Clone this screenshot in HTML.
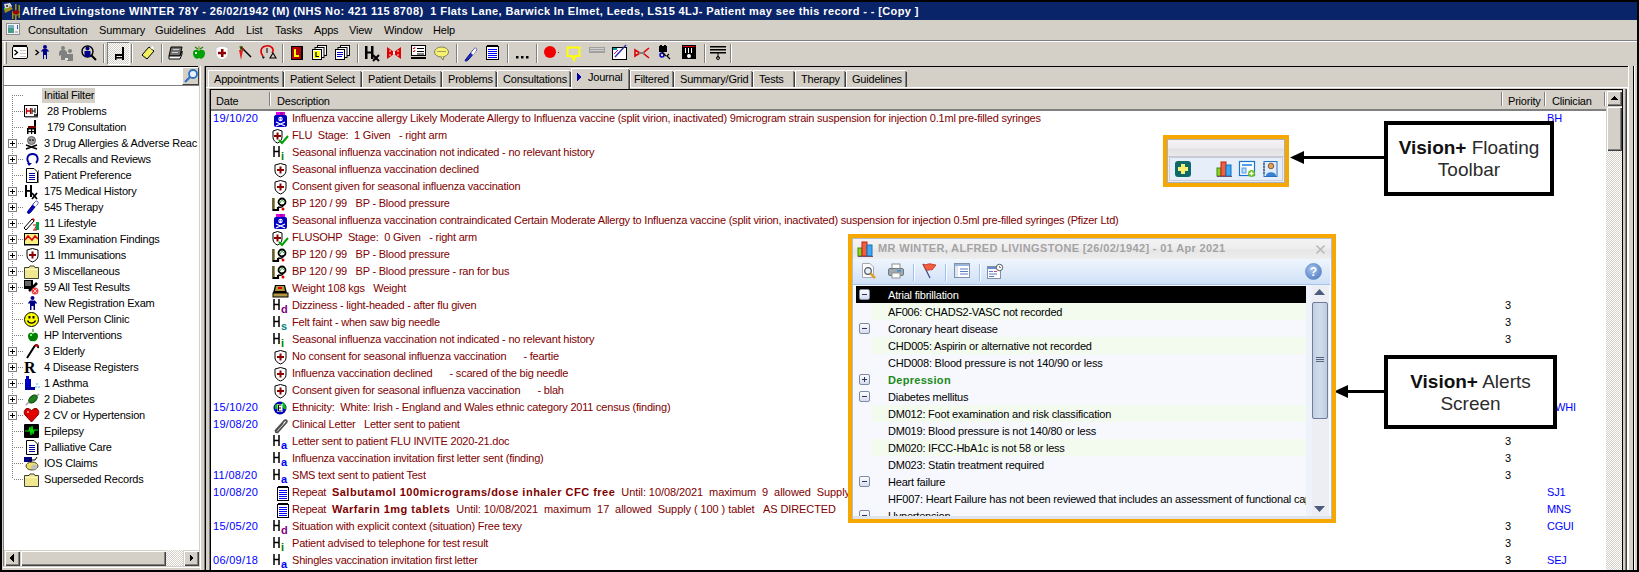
<!DOCTYPE html><html><head><meta charset="utf-8"><style>
*{margin:0;padding:0;box-sizing:border-box}
html,body{width:1639px;height:572px;overflow:hidden;background:#000}
body{position:relative;font-family:"Liberation Sans",sans-serif;font-size:11px;color:#000}
.a{position:absolute}
.t{position:absolute;white-space:pre;line-height:13px}
.j{letter-spacing:-0.21px}
.b{font-weight:bold}
.rx{font-weight:bold;letter-spacing:0.5px}
svg{position:absolute;overflow:visible}
</style></head><body>
<div class="a" style="left:2px;top:2px;width:1635px;height:18px;background:#0a246a"></div>
<div class="t b" style="left:22px;top:5px;color:#fff;letter-spacing:0.39px">Alfred Livingstone WINTER 78Y - 26/02/1942 (M) (NHS No: 421 115 8708)  1 Flats Lane, Barwick In Elmet, Leeds, LS15 4LJ- Patient may see this record - - [Copy ]</div>
<div class="a" style="left:2px;top:20px;width:1635px;height:20px;background:#d4d0c8"></div>
<div class="a" style="left:2px;top:40px;width:1635px;height:1px;background:#808080"></div>
<div class="a" style="left:2px;top:41px;width:1635px;height:1px;background:#fff"></div>
<div class="t " style="left:28px;top:24px;letter-spacing:-0.15px">Consultation</div>
<div class="t " style="left:99px;top:24px;letter-spacing:-0.15px">Summary</div>
<div class="t " style="left:155px;top:24px;letter-spacing:-0.15px">Guidelines</div>
<div class="t " style="left:215px;top:24px;letter-spacing:-0.15px">Add</div>
<div class="t " style="left:246px;top:24px;letter-spacing:-0.15px">List</div>
<div class="t " style="left:275px;top:24px;letter-spacing:-0.15px">Tasks</div>
<div class="t " style="left:314px;top:24px;letter-spacing:-0.15px">Apps</div>
<div class="t " style="left:349px;top:24px;letter-spacing:-0.15px">View</div>
<div class="t " style="left:384px;top:24px;letter-spacing:-0.15px">Window</div>
<div class="t " style="left:433px;top:24px;letter-spacing:-0.15px">Help</div>
<div class="a" style="left:2px;top:42px;width:1635px;height:24px;background:#d4d0c8"></div>
<div class="a" style="left:2px;top:66px;width:203px;height:504px;background:#d4d0c8"></div>
<div class="a" style="left:3px;top:66px;width:195px;height:1px;background:#000"></div>
<div class="a" style="left:3px;top:67px;width:1px;height:503px;background:#808080"></div>
<div class="a" style="left:4px;top:67px;width:195px;height:18px;background:#fff"></div>
<div class="a" style="left:4px;top:85px;width:195px;height:1px;background:#808080"></div>
<div class="a" style="left:4px;top:86px;width:195px;height:464px;background:#fff"></div>
<div class="a" style="left:200px;top:66px;width:1px;height:504px;background:#fff"></div>
<div class="a" style="left:204px;top:66px;width:1px;height:504px;background:#808080"></div>
<div class="a" style="left:205px;top:66px;width:1px;height:504px;background:#000"></div>
<div class="a" style="left:206px;top:67px;width:1422px;height:503px;background:#d4d0c8"></div>
<div class="a" style="left:205px;top:66px;width:1423px;height:1px;background:#000"></div>
<div class="a" style="left:1628px;top:66px;width:1px;height:504px;background:#fff"></div>
<div class="a" style="left:1633px;top:66px;width:1px;height:504px;background:#000"></div>
<div class="a" style="left:1634px;top:66px;width:1px;height:504px;background:#fff"></div>
<div class="a" style="left:1635px;top:66px;width:2px;height:504px;background:#d4d0c8"></div>
<div class="a" style="left:1629px;top:66px;width:4px;height:504px;background:#d4d0c8"></div>
<div class="a" style="left:1625px;top:89px;width:1px;height:481px;background:#808080"></div>
<div class="a" style="left:1626px;top:89px;width:1px;height:481px;background:#404040"></div>
<div class="a" style="left:1627px;top:87px;width:1px;height:483px;background:#fff"></div>
<div class="a" style="left:209px;top:89px;width:1414px;height:481px;background:#808080"></div>
<div class="a" style="left:210px;top:89px;width:1413px;height:1px;background:#000"></div>
<div class="a" style="left:210px;top:90px;width:1px;height:480px;background:#000"></div>
<div class="a" style="left:1622px;top:89px;width:1px;height:481px;background:#000"></div>
<div class="a" style="left:211px;top:90px;width:1411px;height:19px;background:#d4d0c8"></div>
<div class="a" style="left:211px;top:109px;width:1395px;height:2px;background:#808080"></div>
<div class="a" style="left:211px;top:111px;width:1395px;height:459px;background:#fff"></div>
<div class="t j" style="left:216px;top:95px;">Date</div>
<div class="t j" style="left:277px;top:95px;">Description</div>
<div class="t j" style="left:1508px;top:95px;">Priority</div>
<div class="t j" style="left:1552px;top:95px;">Clinician</div>
<div class="a" style="left:269px;top:92px;width:1px;height:14px;background:#808080"></div>
<div class="a" style="left:270px;top:92px;width:1px;height:14px;background:#fff"></div>
<div class="a" style="left:1501px;top:92px;width:1px;height:14px;background:#808080"></div>
<div class="a" style="left:1502px;top:92px;width:1px;height:14px;background:#fff"></div>
<div class="a" style="left:1544px;top:92px;width:1px;height:14px;background:#808080"></div>
<div class="a" style="left:1545px;top:92px;width:1px;height:14px;background:#fff"></div>
<div class="a" style="left:1604px;top:92px;width:1px;height:14px;background:#808080"></div>
<div class="a" style="left:1605px;top:92px;width:1px;height:14px;background:#fff"></div>
<div class="a" style="left:208px;top:70px;width:75px;height:17px;background:#d4d0c8;border-top:1px solid #fff;border-left:1px solid #fff"></div>
<div class="a" style="left:282px;top:71px;width:1px;height:16px;background:#808080"></div>
<div class="a" style="left:283px;top:72px;width:1px;height:15px;background:#404040"></div>
<div class="t j" style="left:214px;top:73px;">Appointments</div>
<div class="a" style="left:284px;top:70px;width:77px;height:17px;background:#d4d0c8;border-top:1px solid #fff;border-left:1px solid #fff"></div>
<div class="a" style="left:360px;top:71px;width:1px;height:16px;background:#808080"></div>
<div class="a" style="left:361px;top:72px;width:1px;height:15px;background:#404040"></div>
<div class="t j" style="left:290px;top:73px;">Patient Select</div>
<div class="a" style="left:362px;top:70px;width:79px;height:17px;background:#d4d0c8;border-top:1px solid #fff;border-left:1px solid #fff"></div>
<div class="a" style="left:440px;top:71px;width:1px;height:16px;background:#808080"></div>
<div class="a" style="left:441px;top:72px;width:1px;height:15px;background:#404040"></div>
<div class="t j" style="left:368px;top:73px;">Patient Details</div>
<div class="a" style="left:442px;top:70px;width:54px;height:17px;background:#d4d0c8;border-top:1px solid #fff;border-left:1px solid #fff"></div>
<div class="a" style="left:495px;top:71px;width:1px;height:16px;background:#808080"></div>
<div class="a" style="left:496px;top:72px;width:1px;height:15px;background:#404040"></div>
<div class="t j" style="left:448px;top:73px;">Problems</div>
<div class="a" style="left:497px;top:70px;width:73px;height:17px;background:#d4d0c8;border-top:1px solid #fff;border-left:1px solid #fff"></div>
<div class="a" style="left:569px;top:71px;width:1px;height:16px;background:#808080"></div>
<div class="a" style="left:570px;top:72px;width:1px;height:15px;background:#404040"></div>
<div class="t j" style="left:503px;top:73px;">Consultations</div>
<div class="a" style="left:630px;top:70px;width:43px;height:17px;background:#d4d0c8;border-top:1px solid #fff;border-left:1px solid #fff"></div>
<div class="a" style="left:672px;top:71px;width:1px;height:16px;background:#808080"></div>
<div class="a" style="left:673px;top:72px;width:1px;height:15px;background:#404040"></div>
<div class="t j" style="left:634px;top:73px;">Filtered</div>
<div class="a" style="left:674px;top:70px;width:78px;height:17px;background:#d4d0c8;border-top:1px solid #fff;border-left:1px solid #fff"></div>
<div class="a" style="left:751px;top:71px;width:1px;height:16px;background:#808080"></div>
<div class="a" style="left:752px;top:72px;width:1px;height:15px;background:#404040"></div>
<div class="t j" style="left:680px;top:73px;">Summary/Grid</div>
<div class="a" style="left:753px;top:70px;width:41px;height:17px;background:#d4d0c8;border-top:1px solid #fff;border-left:1px solid #fff"></div>
<div class="a" style="left:793px;top:71px;width:1px;height:16px;background:#808080"></div>
<div class="a" style="left:794px;top:72px;width:1px;height:15px;background:#404040"></div>
<div class="t j" style="left:759px;top:73px;">Tests</div>
<div class="a" style="left:795px;top:70px;width:50px;height:17px;background:#d4d0c8;border-top:1px solid #fff;border-left:1px solid #fff"></div>
<div class="a" style="left:844px;top:71px;width:1px;height:16px;background:#808080"></div>
<div class="a" style="left:845px;top:72px;width:1px;height:15px;background:#404040"></div>
<div class="t j" style="left:801px;top:73px;">Therapy</div>
<div class="a" style="left:846px;top:70px;width:60px;height:17px;background:#d4d0c8;border-top:1px solid #fff;border-left:1px solid #fff"></div>
<div class="a" style="left:905px;top:71px;width:1px;height:16px;background:#808080"></div>
<div class="a" style="left:906px;top:72px;width:1px;height:15px;background:#404040"></div>
<div class="t j" style="left:852px;top:73px;">Guidelines</div>
<div class="a" style="left:206px;top:87px;width:1422px;height:1px;background:#fff"></div>
<div class="a" style="left:571px;top:68px;width:58px;height:21px;background:#d4d0c8;border-top:1px solid #fff;border-left:1px solid #fff"></div>
<div class="a" style="left:628px;top:69px;width:1px;height:20px;background:#808080"></div>
<div class="a" style="left:629px;top:70px;width:1px;height:19px;background:#404040"></div>
<div class="t j" style="left:588px;top:71px;">Journal</div>
<svg style="left:577px;top:73px" width="5" height="8" viewBox="0 0 5 8" shape-rendering="crispEdges"><path d="M0 0 L5 4 L0 8Z" fill="#0000a0"/></svg>
<div class="a" style="left:4px;top:86px;width:195px;height:464px;overflow:hidden">
<div class="a" style="left:38px;top:2px;width:53px;height:15px;background:#d4d0c8"></div>
<div class="t j" style="left:40px;top:3px;">Initial Filter</div>
<div class="t j" style="left:43px;top:19px;">28 Problems</div>
<div class="t j" style="left:43px;top:35px;">179 Consultation</div>
<div class="t j" style="left:40px;top:51px;">3 Drug Allergies &amp; Adverse Reac</div>
<div class="t j" style="left:40px;top:67px;">2 Recalls and Reviews</div>
<div class="t j" style="left:40px;top:83px;">Patient Preference</div>
<div class="t j" style="left:40px;top:99px;">175 Medical History</div>
<div class="t j" style="left:40px;top:115px;">545 Therapy</div>
<div class="t j" style="left:40px;top:131px;">11 Lifestyle</div>
<div class="t j" style="left:40px;top:147px;">39 Examination Findings</div>
<div class="t j" style="left:40px;top:163px;">11 Immunisations</div>
<div class="t j" style="left:40px;top:179px;">3 Miscellaneous</div>
<div class="t j" style="left:40px;top:195px;">59 All Test Results</div>
<div class="t j" style="left:40px;top:211px;">New Registration Exam</div>
<div class="t j" style="left:40px;top:227px;">Well Person Clinic</div>
<div class="t j" style="left:40px;top:243px;">HP Interventions</div>
<div class="t j" style="left:40px;top:259px;">3 Elderly</div>
<div class="t j" style="left:40px;top:275px;">4 Disease Registers</div>
<div class="t j" style="left:40px;top:291px;">1 Asthma</div>
<div class="t j" style="left:40px;top:307px;">2 Diabetes</div>
<div class="t j" style="left:40px;top:323px;">2 CV or Hypertension</div>
<div class="t j" style="left:40px;top:339px;">Epilepsy</div>
<div class="t j" style="left:40px;top:355px;">Palliative Care</div>
<div class="t j" style="left:40px;top:371px;">IOS Claims</div>
<div class="t j" style="left:40px;top:387px;">Superseded Records</div>
<div class="a" style="left:8px;top:9px;width:1px;height:384px;background:repeating-linear-gradient(#808080 0 1px,transparent 1px 2px)"></div>
<div class="a" style="left:9px;top:9px;width:10px;height:1px;background:repeating-linear-gradient(90deg,transparent 0 1px,#808080 1px 2px)"></div>
<div class="a" style="left:9px;top:25px;width:10px;height:1px;background:repeating-linear-gradient(90deg,transparent 0 1px,#808080 1px 2px)"></div>
<div class="a" style="left:9px;top:41px;width:10px;height:1px;background:repeating-linear-gradient(90deg,transparent 0 1px,#808080 1px 2px)"></div>
<div class="a" style="left:9px;top:57px;width:10px;height:1px;background:repeating-linear-gradient(90deg,transparent 0 1px,#808080 1px 2px)"></div>
<div class="a" style="left:4px;top:53px;width:9px;height:9px;background:#fff;border:1px solid #808080"></div>
<div class="a" style="left:6px;top:57px;width:5px;height:1px;background:#000"></div>
<div class="a" style="left:8px;top:55px;width:1px;height:5px;background:#000"></div>
<div class="a" style="left:9px;top:73px;width:10px;height:1px;background:repeating-linear-gradient(90deg,transparent 0 1px,#808080 1px 2px)"></div>
<div class="a" style="left:4px;top:69px;width:9px;height:9px;background:#fff;border:1px solid #808080"></div>
<div class="a" style="left:6px;top:73px;width:5px;height:1px;background:#000"></div>
<div class="a" style="left:8px;top:71px;width:1px;height:5px;background:#000"></div>
<div class="a" style="left:9px;top:89px;width:10px;height:1px;background:repeating-linear-gradient(90deg,transparent 0 1px,#808080 1px 2px)"></div>
<div class="a" style="left:9px;top:105px;width:10px;height:1px;background:repeating-linear-gradient(90deg,transparent 0 1px,#808080 1px 2px)"></div>
<div class="a" style="left:4px;top:101px;width:9px;height:9px;background:#fff;border:1px solid #808080"></div>
<div class="a" style="left:6px;top:105px;width:5px;height:1px;background:#000"></div>
<div class="a" style="left:8px;top:103px;width:1px;height:5px;background:#000"></div>
<div class="a" style="left:9px;top:121px;width:10px;height:1px;background:repeating-linear-gradient(90deg,transparent 0 1px,#808080 1px 2px)"></div>
<div class="a" style="left:4px;top:117px;width:9px;height:9px;background:#fff;border:1px solid #808080"></div>
<div class="a" style="left:6px;top:121px;width:5px;height:1px;background:#000"></div>
<div class="a" style="left:8px;top:119px;width:1px;height:5px;background:#000"></div>
<div class="a" style="left:9px;top:137px;width:10px;height:1px;background:repeating-linear-gradient(90deg,transparent 0 1px,#808080 1px 2px)"></div>
<div class="a" style="left:4px;top:133px;width:9px;height:9px;background:#fff;border:1px solid #808080"></div>
<div class="a" style="left:6px;top:137px;width:5px;height:1px;background:#000"></div>
<div class="a" style="left:8px;top:135px;width:1px;height:5px;background:#000"></div>
<div class="a" style="left:9px;top:153px;width:10px;height:1px;background:repeating-linear-gradient(90deg,transparent 0 1px,#808080 1px 2px)"></div>
<div class="a" style="left:4px;top:149px;width:9px;height:9px;background:#fff;border:1px solid #808080"></div>
<div class="a" style="left:6px;top:153px;width:5px;height:1px;background:#000"></div>
<div class="a" style="left:8px;top:151px;width:1px;height:5px;background:#000"></div>
<div class="a" style="left:9px;top:169px;width:10px;height:1px;background:repeating-linear-gradient(90deg,transparent 0 1px,#808080 1px 2px)"></div>
<div class="a" style="left:4px;top:165px;width:9px;height:9px;background:#fff;border:1px solid #808080"></div>
<div class="a" style="left:6px;top:169px;width:5px;height:1px;background:#000"></div>
<div class="a" style="left:8px;top:167px;width:1px;height:5px;background:#000"></div>
<div class="a" style="left:9px;top:185px;width:10px;height:1px;background:repeating-linear-gradient(90deg,transparent 0 1px,#808080 1px 2px)"></div>
<div class="a" style="left:4px;top:181px;width:9px;height:9px;background:#fff;border:1px solid #808080"></div>
<div class="a" style="left:6px;top:185px;width:5px;height:1px;background:#000"></div>
<div class="a" style="left:8px;top:183px;width:1px;height:5px;background:#000"></div>
<div class="a" style="left:9px;top:201px;width:10px;height:1px;background:repeating-linear-gradient(90deg,transparent 0 1px,#808080 1px 2px)"></div>
<div class="a" style="left:4px;top:197px;width:9px;height:9px;background:#fff;border:1px solid #808080"></div>
<div class="a" style="left:6px;top:201px;width:5px;height:1px;background:#000"></div>
<div class="a" style="left:8px;top:199px;width:1px;height:5px;background:#000"></div>
<div class="a" style="left:9px;top:217px;width:10px;height:1px;background:repeating-linear-gradient(90deg,transparent 0 1px,#808080 1px 2px)"></div>
<div class="a" style="left:9px;top:233px;width:10px;height:1px;background:repeating-linear-gradient(90deg,transparent 0 1px,#808080 1px 2px)"></div>
<div class="a" style="left:9px;top:249px;width:10px;height:1px;background:repeating-linear-gradient(90deg,transparent 0 1px,#808080 1px 2px)"></div>
<div class="a" style="left:9px;top:265px;width:10px;height:1px;background:repeating-linear-gradient(90deg,transparent 0 1px,#808080 1px 2px)"></div>
<div class="a" style="left:4px;top:261px;width:9px;height:9px;background:#fff;border:1px solid #808080"></div>
<div class="a" style="left:6px;top:265px;width:5px;height:1px;background:#000"></div>
<div class="a" style="left:8px;top:263px;width:1px;height:5px;background:#000"></div>
<div class="a" style="left:9px;top:281px;width:10px;height:1px;background:repeating-linear-gradient(90deg,transparent 0 1px,#808080 1px 2px)"></div>
<div class="a" style="left:4px;top:277px;width:9px;height:9px;background:#fff;border:1px solid #808080"></div>
<div class="a" style="left:6px;top:281px;width:5px;height:1px;background:#000"></div>
<div class="a" style="left:8px;top:279px;width:1px;height:5px;background:#000"></div>
<div class="a" style="left:9px;top:297px;width:10px;height:1px;background:repeating-linear-gradient(90deg,transparent 0 1px,#808080 1px 2px)"></div>
<div class="a" style="left:4px;top:293px;width:9px;height:9px;background:#fff;border:1px solid #808080"></div>
<div class="a" style="left:6px;top:297px;width:5px;height:1px;background:#000"></div>
<div class="a" style="left:8px;top:295px;width:1px;height:5px;background:#000"></div>
<div class="a" style="left:9px;top:313px;width:10px;height:1px;background:repeating-linear-gradient(90deg,transparent 0 1px,#808080 1px 2px)"></div>
<div class="a" style="left:4px;top:309px;width:9px;height:9px;background:#fff;border:1px solid #808080"></div>
<div class="a" style="left:6px;top:313px;width:5px;height:1px;background:#000"></div>
<div class="a" style="left:8px;top:311px;width:1px;height:5px;background:#000"></div>
<div class="a" style="left:9px;top:329px;width:10px;height:1px;background:repeating-linear-gradient(90deg,transparent 0 1px,#808080 1px 2px)"></div>
<div class="a" style="left:4px;top:325px;width:9px;height:9px;background:#fff;border:1px solid #808080"></div>
<div class="a" style="left:6px;top:329px;width:5px;height:1px;background:#000"></div>
<div class="a" style="left:8px;top:327px;width:1px;height:5px;background:#000"></div>
<div class="a" style="left:9px;top:345px;width:10px;height:1px;background:repeating-linear-gradient(90deg,transparent 0 1px,#808080 1px 2px)"></div>
<div class="a" style="left:9px;top:361px;width:10px;height:1px;background:repeating-linear-gradient(90deg,transparent 0 1px,#808080 1px 2px)"></div>
<div class="a" style="left:9px;top:377px;width:10px;height:1px;background:repeating-linear-gradient(90deg,transparent 0 1px,#808080 1px 2px)"></div>
<div class="a" style="left:9px;top:393px;width:10px;height:1px;background:repeating-linear-gradient(90deg,transparent 0 1px,#808080 1px 2px)"></div>
</div>
<div class="a" style="left:4px;top:550px;width:195px;height:16px;background:repeating-conic-gradient(#d4d0c8 0 25%,#fff 0 50%) 0 0/2px 2px"></div>
<div class="a" style="left:4px;top:550px;width:16px;height:16px;background:#d4d0c8;box-shadow:inset 1px 1px #d4d0c8,inset 2px 2px #fff,inset -1px -1px #404040,inset -2px -2px #808080"></div>
<div class="a" style="left:20px;top:550px;width:146px;height:16px;background:#d4d0c8;box-shadow:inset 1px 1px #d4d0c8,inset 2px 2px #fff,inset -1px -1px #404040,inset -2px -2px #808080"></div>
<div class="a" style="left:183px;top:550px;width:16px;height:16px;background:#d4d0c8;box-shadow:inset 1px 1px #d4d0c8,inset 2px 2px #fff,inset -1px -1px #404040,inset -2px -2px #808080"></div>
<svg style="left:9px;top:554px" width="5" height="8" viewBox="0 0 5 8" shape-rendering="crispEdges"><path d="M4.5 0 V8 L0.5 4Z" fill="#000"/></svg>
<svg style="left:189px;top:554px" width="5" height="8" viewBox="0 0 5 8" shape-rendering="crispEdges"><path d="M0.5 0 V8 L4.5 4Z" fill="#000"/></svg>
<div class="a" style="left:3px;top:566px;width:197px;height:1px;background:#d4d0c8"></div>
<div class="a" style="left:3px;top:567px;width:197px;height:1px;background:#fff"></div>
<div class="a" style="left:3px;top:568px;width:197px;height:2px;background:#d4d0c8"></div>
<div class="a" style="left:2px;top:570px;width:1637px;height:2px;background:#000"></div>
<div class="a" style="left:211px;top:111px;width:1395px;height:459px;overflow:hidden">
<div class="t " style="left:2px;top:1px;color:#0000ff;letter-spacing:0.3px">19/10/20</div>
<div class="t j" style="left:81px;top:1px;color:#800000">Influenza vaccine allergy Likely Moderate Allergy to Influenza vaccine (split virion, inactivated) 9microgram strain suspension for injection 0.1ml pre-filled syringes</div>
<div class="t j" style="left:1336px;top:1px;color:#0000ff">BH</div>
<div class="t j" style="left:81px;top:18px;color:#800000">FLU  Stage:  1 Given   - right arm</div>
<div class="t j" style="left:81px;top:35px;color:#800000">Seasonal influenza vaccination not indicated - no relevant history</div>
<div class="t j" style="left:81px;top:52px;color:#800000">Seasonal influenza vaccination declined</div>
<div class="t j" style="left:81px;top:69px;color:#800000">Consent given for seasonal influenza vaccination</div>
<div class="t j" style="left:81px;top:86px;color:#800000">BP 120 / 99   BP - Blood pressure</div>
<div class="t j" style="left:81px;top:103px;color:#800000">Seasonal influenza vaccination contraindicated Certain Moderate Allergy to Influenza vaccine (split virion, inactivated) suspension for injection 0.5ml pre-filled syringes (Pfizer Ltd)</div>
<div class="t j" style="left:81px;top:120px;color:#800000">FLUSOHP  Stage:  0 Given   - right arm</div>
<div class="t j" style="left:81px;top:137px;color:#800000">BP 120 / 99   BP - Blood pressure</div>
<div class="t j" style="left:81px;top:154px;color:#800000">BP 120 / 99   BP - Blood pressure - ran for bus</div>
<div class="t j" style="left:81px;top:171px;color:#800000">Weight 108 kgs   Weight</div>
<div class="t j" style="left:81px;top:188px;color:#800000">Dizziness - light-headed - after flu given</div>
<div class="t j" style="left:1294px;top:188px;">3</div>
<div class="t j" style="left:81px;top:205px;color:#800000">Felt faint - when saw big needle</div>
<div class="t j" style="left:1294px;top:205px;">3</div>
<div class="t j" style="left:81px;top:222px;color:#800000">Seasonal influenza vaccination not indicated - no relevant history</div>
<div class="t j" style="left:1294px;top:222px;">3</div>
<div class="t j" style="left:81px;top:239px;color:#800000">No consent for seasonal influenza vaccination      - feartie</div>
<div class="t j" style="left:81px;top:256px;color:#800000">Influenza vaccination declined      - scared of the big needle</div>
<div class="t j" style="left:81px;top:273px;color:#800000">Consent given for seasonal influenza vaccination      - blah</div>
<div class="t " style="left:2px;top:290px;color:#0000ff;letter-spacing:0.3px">15/10/20</div>
<div class="t j" style="left:81px;top:290px;color:#800000">Ethnicity:  White: Irish - England and Wales ethnic category 2011 census (finding)</div>
<div class="t j" style="left:1344px;top:290px;color:#0000ff">WHI</div>
<div class="t " style="left:2px;top:307px;color:#0000ff;letter-spacing:0.3px">19/08/20</div>
<div class="t j" style="left:81px;top:307px;color:#800000">Clinical Letter   Letter sent to patient</div>
<div class="t j" style="left:81px;top:324px;color:#800000">Letter sent to patient FLU INVITE 2020-21.doc</div>
<div class="t j" style="left:1294px;top:324px;">3</div>
<div class="t j" style="left:81px;top:341px;color:#800000">Influenza vaccination invitation first letter sent (finding)</div>
<div class="t j" style="left:1294px;top:341px;">3</div>
<div class="t " style="left:2px;top:358px;color:#0000ff;letter-spacing:0.3px">11/08/20</div>
<div class="t j" style="left:81px;top:358px;color:#800000">SMS text sent to patient Test</div>
<div class="t j" style="left:1294px;top:358px;">3</div>
<div class="t " style="left:2px;top:375px;color:#0000ff;letter-spacing:0.3px">10/08/20</div>
<div class="t j" style="left:81px;top:375px;color:#800000">Repeat  <b class="rx">Salbutamol 100micrograms/dose inhaler CFC free</b><span style="letter-spacing:-0.08px">  Until: 10/08/2021  maximum  9  allowed  Supply ( 200 ) dose  AS DIRECTED</span></div>
<div class="t j" style="left:1336px;top:375px;color:#0000ff">SJ1</div>
<div class="t j" style="left:81px;top:392px;color:#800000">Repeat  <b class="rx">Warfarin 1mg tablets</b><span style="letter-spacing:-0.08px">  Until: 10/08/2021  maximum  17  allowed  Supply ( 100 ) tablet   AS DIRECTED</span></div>
<div class="t j" style="left:1336px;top:392px;color:#0000ff">MNS</div>
<div class="t " style="left:2px;top:409px;color:#0000ff;letter-spacing:0.3px">15/05/20</div>
<div class="t j" style="left:81px;top:409px;color:#800000">Situation with explicit context (situation) Free texy</div>
<div class="t j" style="left:1294px;top:409px;">3</div>
<div class="t j" style="left:1336px;top:409px;color:#0000ff">CGUI</div>
<div class="t j" style="left:81px;top:426px;color:#800000">Patient advised to telephone for test result</div>
<div class="t j" style="left:1294px;top:426px;">3</div>
<div class="t " style="left:2px;top:443px;color:#0000ff;letter-spacing:0.3px">06/09/18</div>
<div class="t j" style="left:81px;top:443px;color:#800000">Shingles vaccination invitation first letter</div>
<div class="t j" style="left:1294px;top:443px;">3</div>
<div class="t j" style="left:1336px;top:443px;color:#0000ff">SEJ</div>
</div>
<div class="a" style="left:1606px;top:90px;width:16px;height:480px;background:repeating-conic-gradient(#d4d0c8 0 25%,#fff 0 50%) 0 0/2px 2px"></div>
<div class="a" style="left:1606px;top:90px;width:16px;height:16px;background:#d4d0c8;box-shadow:inset 1px 1px #d4d0c8,inset 2px 2px #fff,inset -1px -1px #404040,inset -2px -2px #808080"></div>
<svg style="left:1610px;top:96px" width="8" height="5" viewBox="0 0 8 5" shape-rendering="crispEdges"><path d="M0 4 L4 0 L8 4Z" fill="#000"/></svg>
<div class="a" style="left:1606px;top:106px;width:16px;height:45px;background:#d4d0c8;box-shadow:inset 1px 1px #d4d0c8,inset 2px 2px #fff,inset -1px -1px #404040,inset -2px -2px #808080"></div>
<svg style="left:4px;top:3px" width="17" height="17" viewBox="0 0 17 17"><path d="M0 1 L6 0 L8 3 L7 5 L1 6Z" fill="#d8d8d8"/><rect x="2" y="2" width="2" height="2" fill="#505050"/><rect x="5" y="3" width="2" height="2" fill="#a0a0a0"/><path d="M0 6 L7 4 L9 6 L1 10Z" fill="#a09018"/><rect x="0" y="5" width="1.5" height="1.5" fill="#20e020"/><rect x="11" y="1" width="1.5" height="16" fill="#a09018"/><rect x="14.5" y="2" width="1.5" height="13" fill="#a09018"/><rect x="8" y="8" width="1.5" height="8" fill="#a09018"/><path d="M8 9 L12 7 L16 9 L12 12Z" fill="#a00000"/><path d="M8 10 L12 12 L16 10 V11 L12 13 L8 11Z" fill="#a09018"/></svg>
<svg style="left:6px;top:23px" width="14" height="12" viewBox="0 0 14 12"><rect x="0.5" y="0.5" width="13" height="11" fill="#f4f4f8" stroke="#8c8c94"/><rect x="2" y="2" width="6" height="8" fill="#4a9a8a"/><rect x="2" y="2" width="6" height="3" fill="#7ab0c0"/><rect x="11" y="2" width="1" height="4" fill="#2a60c0"/><rect x="9" y="8" width="3" height="2" fill="#c0c0c0"/></svg>
<div class="a" style="left:4px;top:42px;width:1px;height:22px;background:#fff"></div>
<div class="a" style="left:6px;top:42px;width:1px;height:22px;background:#808080"></div>
<div class="a" style="left:103px;top:44px;width:1px;height:19px;background:#808080"></div>
<div class="a" style="left:104px;top:44px;width:1px;height:19px;background:#fff"></div>
<div class="a" style="left:131px;top:44px;width:1px;height:19px;background:#808080"></div>
<div class="a" style="left:132px;top:44px;width:1px;height:19px;background:#fff"></div>
<div class="a" style="left:161px;top:44px;width:1px;height:19px;background:#808080"></div>
<div class="a" style="left:162px;top:44px;width:1px;height:19px;background:#fff"></div>
<div class="a" style="left:282px;top:44px;width:1px;height:19px;background:#808080"></div>
<div class="a" style="left:283px;top:44px;width:1px;height:19px;background:#fff"></div>
<div class="a" style="left:357px;top:44px;width:1px;height:19px;background:#808080"></div>
<div class="a" style="left:358px;top:44px;width:1px;height:19px;background:#fff"></div>
<div class="a" style="left:456px;top:44px;width:1px;height:19px;background:#808080"></div>
<div class="a" style="left:457px;top:44px;width:1px;height:19px;background:#fff"></div>
<div class="a" style="left:507px;top:44px;width:1px;height:19px;background:#808080"></div>
<div class="a" style="left:508px;top:44px;width:1px;height:19px;background:#fff"></div>
<div class="a" style="left:536px;top:44px;width:1px;height:19px;background:#808080"></div>
<div class="a" style="left:537px;top:44px;width:1px;height:19px;background:#fff"></div>
<div class="a" style="left:704px;top:44px;width:1px;height:19px;background:#808080"></div>
<div class="a" style="left:705px;top:44px;width:1px;height:19px;background:#fff"></div>
<div class="a" style="left:730px;top:44px;width:1px;height:19px;background:#808080"></div>
<div class="a" style="left:731px;top:44px;width:1px;height:19px;background:#fff"></div>
<div class="a" style="left:107px;top:42px;width:23px;height:23px;background:repeating-conic-gradient(#d4d0c8 0 25%,#fff 0 50%) 0 0/2px 2px;border-top:1px solid #808080;border-left:1px solid #808080;border-right:1px solid #fff;border-bottom:1px solid #fff"></div>
<svg style="left:12px;top:45px" width="16" height="16" viewBox="0 0 16 16"><rect x="0.5" y="1.5" width="15" height="12" rx="1.5" fill="#fff" stroke="#000"/><rect x="1" y="0" width="14" height="2" fill="#000"/><path d="M2.5 5 L5.5 7.5 L2.5 10" fill="none" stroke="#000" stroke-width="1.3"/><rect x="8" y="5" width="6" height="1" fill="#c8c4bc"/><rect x="8" y="8" width="6" height="1" fill="#c8c4bc"/><rect x="8" y="11" width="6" height="1" fill="#c8c4bc"/></svg>
<svg style="left:35px;top:45px" width="16" height="16" viewBox="0 0 16 16"><path d="M0.5 5 L3.5 7.5 L0.5 10" fill="none" stroke="#000" stroke-width="1.3"/><circle cx="10" cy="2" r="2" fill="#00008b"/><path d="M6 6 L8 4 H12 L14 6 L13 7 L12 6 V14 H11 V10 H9 V14 H8 V6 L7 7Z" fill="#00008b"/></svg>
<svg style="left:58px;top:46px" width="16" height="16" viewBox="0 0 16 16"><circle cx="5" cy="2" r="2" fill="#808080"/><path d="M1 6 L3 4 H7 L9 6 V14 H3 V9 L1 10Z" fill="#808080"/><circle cx="12" cy="5" r="2" fill="#808080"/><path d="M9 8 H15 V15 H9Z" fill="#808080"/><rect x="7" y="12" width="3" height="2" fill="#e8e8e8"/></svg>
<svg style="left:81px;top:45px" width="16" height="16" viewBox="0 0 16 16"><circle cx="6.5" cy="6.5" r="5.5" fill="#d4d0c8" stroke="#000" stroke-width="1.4"/><circle cx="6.5" cy="3.5" r="2" fill="#00008b"/><path d="M3.5 6 H9.5 V12 H3.5Z" fill="#00008b"/><path d="M10 10 L15 15" stroke="#000" stroke-width="2"/></svg>
<svg style="left:114px;top:47px" width="10" height="13" viewBox="0 0 10 13"><rect x="8" y="0" width="2" height="13" fill="#000"/><rect x="1" y="7" width="9" height="2" fill="#000"/><rect x="1" y="10" width="9" height="1.5" fill="#000"/><rect x="1" y="7" width="1.5" height="6" fill="#000"/></svg>
<svg style="left:141px;top:46px" width="14" height="14" viewBox="0 0 14 14"><path d="M1 9 L8 1 L13 5 L6 13Z" fill="#f0f060" stroke="#000" stroke-width="1"/><path d="M9 2 L12 0 L13 4Z" fill="#fff"/></svg>
<svg style="left:168px;top:46px" width="15" height="14" viewBox="0 0 15 14"><path d="M3 1 H14 L12 10 H1Z" fill="#707070" stroke="#000"/><path d="M1 10 H12 L14 5 V8 L12 13 H1Z" fill="#fff" stroke="#000"/><rect x="5" y="3" width="6" height="1" fill="#d0d0d0"/><rect x="4" y="6" width="6" height="1" fill="#d0d0d0"/></svg>
<svg style="left:192px;top:45px" width="14" height="15" viewBox="0 0 14 15"><path d="M7 1 V5" stroke="#a08020" stroke-width="1"/><path d="M3 2 L6 4" stroke="#080" stroke-width="1.2"/><path d="M11 2 L8 4" stroke="#080" stroke-width="1.2"/><path d="M1 8 C1 4 6 4 7 6 C8 4 13 4 13 8 C13 12 10 15 7 13 C4 15 1 12 1 8Z" fill="#00a000"/><rect x="3" y="7" width="2" height="2" fill="#e0ffe0"/></svg>
<svg style="left:215px;top:46px" width="14" height="15" viewBox="0 0 14 15"><path d="M1 1.5 L7 0 L13 1.5 V8 C13 11 10 13 7 14 C4 13 1 11 1 8Z" fill="#fff" stroke="#c8c8c8"/><rect x="6" y="3" width="2.5" height="8" fill="#8b0000"/><rect x="3" y="5.8" width="8" height="2.5" fill="#8b0000"/></svg>
<svg style="left:237px;top:46px" width="15" height="15" viewBox="0 0 15 15"><path d="M2 4 L6 4 L4 14Z" fill="#e02020"/><path d="M3 0 L4 4 L5 0" stroke="#080" stroke-width="1.2" fill="none"/><path d="M4 1 L14 11" stroke="#000" stroke-width="1.4"/><path d="M4 1 L7 4" stroke="#b00000" stroke-width="1.4"/></svg>
<svg style="left:260px;top:45px" width="17" height="15" viewBox="0 0 17 15"><path d="M3 11 C0 8 0 2 6 1 C11 0 15 4 12 8" fill="none" stroke="#e00000" stroke-width="1.6"/><path d="M7 3 V8" stroke="#000" stroke-width="1"/><path d="M13 8 L10 13 H16Z" fill="none" stroke="#000" stroke-width="1.1"/><path d="M2 11 L5 12 L3 14Z" fill="#000"/></svg>
<svg style="left:291px;top:46px" width="13" height="14" viewBox="0 0 13 14"><rect x="0.5" y="0.5" width="11" height="13" fill="#b00000" stroke="#000"/><rect x="10" y="1" width="2" height="13" fill="#000"/><path d="M4 3 V10 H8" stroke="#ffff00" stroke-width="2" fill="none"/></svg>
<svg style="left:312px;top:45px" width="15" height="15" viewBox="0 0 15 15"><rect x="5.5" y="0.5" width="9" height="10" fill="#fff" stroke="#000"/><rect x="3" y="2.5" width="9" height="10" fill="#fff" stroke="#000"/><rect x="0.5" y="4.5" width="9" height="10" fill="#fff" stroke="#000"/><rect x="2" y="6" width="6" height="7" fill="#ffff00"/><path d="M4 7 V11.5 H7" stroke="#000" stroke-width="1.2" fill="none"/></svg>
<svg style="left:335px;top:45px" width="15" height="15" viewBox="0 0 15 15"><rect x="5.5" y="0.5" width="9" height="10" fill="#fff" stroke="#000"/><rect x="3" y="2.5" width="9" height="10" fill="#fff" stroke="#000"/><rect x="0.5" y="4.5" width="9" height="10" fill="#fff" stroke="#000"/><rect x="2" y="7" width="6" height="1" fill="#0000c0"/><rect x="2" y="9" width="6" height="1" fill="#0000c0"/><rect x="2" y="11" width="5" height="1" fill="#0000c0"/></svg>
<svg style="left:365px;top:46px" width="15" height="16" viewBox="0 0 15 16"><rect x="0" y="0" width="2.5" height="13" fill="#000"/><rect x="6" y="0" width="2.5" height="13" fill="#000"/><rect x="0" y="5.5" width="8" height="2" fill="#000"/><path d="M8 9 L14 15 M14 9 L8 15" stroke="#000" stroke-width="2"/></svg>
<svg style="left:387px;top:46px" width="15" height="14" viewBox="0 0 15 14"><path d="M0 1 L7 6 L14 1 V13 L7 8 L0 13Z" fill="#e00000"/><circle cx="3" cy="5" r="0.8" fill="#fff"/><circle cx="11" cy="5" r="0.8" fill="#fff"/><circle cx="3" cy="9" r="0.8" fill="#fff"/><circle cx="11" cy="9" r="0.8" fill="#fff"/><rect x="6" y="5.5" width="2" height="3" fill="#fff"/></svg>
<svg style="left:411px;top:45px" width="15" height="15" viewBox="0 0 15 15"><rect x="0.5" y="0.5" width="14" height="10" fill="#fff" stroke="#000"/><path d="M2 3 L3 4 L4 2 M2 6 L3 7 L4 5" stroke="#e00000" fill="none"/><rect x="6" y="3" width="7" height="1" fill="#000"/><rect x="6" y="6" width="7" height="1" fill="#000"/><rect x="6" y="8.5" width="7" height="1" fill="#000"/><rect x="0" y="12" width="15" height="2" fill="#000"/></svg>
<svg style="left:434px;top:46px" width="15" height="15" viewBox="0 0 15 15"><ellipse cx="7.5" cy="6" rx="7" ry="5" fill="#f8f070" stroke="#808060"/><path d="M7 11 L9 14 L10 10" fill="#f8f070" stroke="#808060"/><rect x="3" y="5" width="9" height="1" fill="#a0a060"/></svg>
<svg style="left:464px;top:47px" width="13" height="14" viewBox="0 0 13 14"><path d="M2 12 L10 2 C11 0 14 2 12 4 L4 13 C2 15 0 14 2 12Z" fill="#2030c0" stroke="#000080"/><path d="M7 6 L10 2 C11 0 14 2 12 4 L9 8Z" fill="#fff"/></svg>
<svg style="left:486px;top:45px" width="13" height="15" viewBox="0 0 13 15"><rect x="0.5" y="1.5" width="12" height="13" fill="#fff" stroke="#000"/><rect x="1" y="0" width="11" height="2" fill="#000"/><rect x="2" y="4" width="9" height="1" fill="#0000ff"/><rect x="2" y="6" width="9" height="1" fill="#0000ff"/><rect x="2" y="8" width="9" height="1" fill="#0000ff"/><rect x="2" y="10" width="9" height="1" fill="#0000ff"/><rect x="2" y="12" width="9" height="1" fill="#0000ff"/></svg>
<svg style="left:516px;top:45px" width="14" height="15" viewBox="0 0 14 15"><rect x="0" y="11" width="2.5" height="2.5" fill="#000"/><rect x="5" y="11" width="2.5" height="2.5" fill="#000"/><rect x="10" y="11" width="2.5" height="2.5" fill="#000"/></svg>
<svg style="left:544px;top:45px" width="16" height="15" viewBox="0 0 16 15"><circle cx="6" cy="7" r="6" fill="#f00000"/><rect x="14" y="7" width="1" height="1" fill="#f00000"/></svg>
<svg style="left:566px;top:46px" width="15" height="15" viewBox="0 0 15 15"><path d="M1.5 1.5 H13.5 V10 H9 L8 14 L6 10 H1.5Z" fill="none" stroke="#ffff00" stroke-width="2"/></svg>
<svg style="left:589px;top:46px" width="17" height="10" viewBox="0 0 17 10"><rect x="0" y="1" width="16" height="6" fill="#a0a0a0"/><rect x="1" y="2" width="14" height="1" fill="#d0d0d0"/><rect x="1" y="4" width="14" height="1" fill="#d0d0d0"/></svg>
<svg style="left:612px;top:45px" width="16" height="15" viewBox="0 0 16 15"><rect x="0.5" y="2.5" width="14" height="12" fill="#fff" stroke="#000"/><path d="M3 12 L14 0" stroke="#3030a0" stroke-width="1.5"/><path d="M2 9 L6 5" stroke="#c000c0" stroke-width="1"/><rect x="1" y="3" width="4" height="2" fill="#00a0a0"/></svg>
<svg style="left:634px;top:46px" width="17" height="14" viewBox="0 0 17 14"><path d="M1 4 V10 L6 7Z" fill="none" stroke="#e00000" stroke-width="1.6"/><path d="M15 2 L9 7 L15 12" fill="none" stroke="#e00000" stroke-width="1.6"/><rect x="5" y="6" width="5" height="2" fill="#808080"/></svg>
<svg style="left:658px;top:45px" width="16" height="16" viewBox="0 0 16 16"><rect x="1" y="1" width="8" height="6" fill="#000"/><rect x="2" y="0" width="2" height="2" fill="#000"/><rect x="6" y="0" width="2" height="2" fill="#000"/><circle cx="4" cy="10" r="2" fill="none" stroke="#0000c0" stroke-width="1.5"/><path d="M4 7 L8 11 M11 9 L9 11 L12 14" stroke="#000" fill="none" stroke-width="1.2"/></svg>
<svg style="left:682px;top:45px" width="14" height="15" viewBox="0 0 14 15"><rect x="0" y="0" width="14" height="3" fill="#000"/><rect x="0" y="3" width="14" height="11" fill="#000"/><rect x="1" y="1" width="12" height="1" fill="#e00000"/><rect x="3" y="3" width="1" height="5" fill="#fff"/><rect x="6" y="3" width="1" height="5" fill="#fff"/><rect x="9" y="3" width="1" height="5" fill="#fff"/><circle cx="7" cy="11" r="2" fill="#fff"/></svg>
<svg style="left:710px;top:45px" width="16" height="15" viewBox="0 0 16 15"><rect x="0" y="1" width="16" height="1.5" fill="#000"/><rect x="0" y="4" width="16" height="1.5" fill="#000"/><rect x="0" y="7" width="16" height="1.5" fill="#000"/><path d="M8 8 V13" stroke="#000"/><circle cx="8" cy="13" r="1.5" fill="none" stroke="#000"/></svg>
<div class="a" style="left:182px;top:67px;width:17px;height:18px;background:#d4d0c8;border-top:1px solid #fff;border-left:1px solid #fff;border-right:1px solid #404040;border-bottom:1px solid #404040"></div>
<svg style="left:184px;top:69px" width="14" height="14" viewBox="0 0 14 14"><circle cx="9" cy="5" r="4" fill="#e8f0ff" stroke="#3070c0" stroke-width="1.8"/><path d="M6 8 L1 13" stroke="#3070c0" stroke-width="2.2"/></svg>
<div class="a" style="left:4px;top:86px;width:195px;height:464px;overflow:hidden">
<svg style="left:20px;top:19px" width="14" height="13" viewBox="0 0 14 13"><rect x="0.5" y="0.5" width="13" height="11" fill="#fff" stroke="#000"/><rect x="1" y="11" width="13" height="1.5" fill="#404040"/><path d="M2.5 3 V9 M6.5 3 V9 M2.5 6 H6.5" stroke="#c00000" stroke-width="1.3"/><path d="M8 3 V9 M11 3 V8 M8 6 H11 M10 9 L13 11 M13 9 L10 11" stroke="#000" stroke-width="1"/></svg>
<svg style="left:23px;top:34px" width="10" height="14" viewBox="0 0 10 14"><rect x="7" y="0" width="2" height="14" fill="#000"/><rect x="1" y="6" width="8" height="2.5" fill="#800000"/><rect x="0" y="8" width="9" height="1.5" fill="#000"/><rect x="0" y="11" width="9" height="1.2" fill="#000"/><rect x="0" y="8" width="1.5" height="6" fill="#000"/><rect x="4" y="8" width="1.2" height="6" fill="#000"/></svg>
<svg style="left:21px;top:50px" width="13" height="14" viewBox="0 0 13 14"><circle cx="6.5" cy="4.5" r="4" fill="#a0a0a0" stroke="#606060"/><circle cx="5" cy="4" r="1" fill="#303030"/><circle cx="8" cy="4" r="1" fill="#303030"/><path d="M1 9 L12 13 M12 9 L1 13" stroke="#000" stroke-width="1.5"/></svg>
<svg style="left:22px;top:67px" width="13" height="13" viewBox="0 0 13 13"><path d="M3 10 C0 7 1 1 6.5 1 C12 1 13 7 10 10" fill="none" stroke="#0000a0" stroke-width="1.8"/><path d="M1 10 H6 L3 13Z" fill="#0000a0"/></svg>
<svg style="left:22px;top:82px" width="13" height="15" viewBox="0 0 13 15"><path d="M0.5 0.5 H8 L11.5 4 V14.5 H0.5Z" fill="#fff" stroke="#000"/><rect x="3" y="5" width="6" height="1" fill="#0000a0"/><rect x="3" y="7" width="6" height="1" fill="#0000a0"/><rect x="3" y="9" width="6" height="1" fill="#0000a0"/><rect x="3" y="11" width="6" height="1" fill="#0000a0"/><rect x="12" y="2" width="1" height="13" fill="#808080"/></svg>
<svg style="left:21px;top:99px" width="13" height="14" viewBox="0 0 13 14"><rect x="0" y="0" width="2" height="12" fill="#000"/><rect x="5" y="0" width="2" height="12" fill="#000"/><rect x="0" y="5" width="7" height="1.8" fill="#000"/><path d="M7 8 L12 14 M12 8 L7 14" stroke="#000" stroke-width="1.8"/></svg>
<svg style="left:22px;top:114px" width="13" height="14" viewBox="0 0 13 14"><path d="M2 11 L9 2 C10.5 0 13 2 11.5 4 L4.5 12.5 C3 14.5 0 13 2 11Z" fill="#0000c0" stroke="#000080"/><path d="M7 5 L9 2 C10.5 0 13 2 11.5 4 L9.5 7Z" fill="#fff"/></svg>
<svg style="left:20px;top:130px" width="15" height="15" viewBox="0 0 15 15"><path d="M0 12 L8 3 L10 5 L2 14Z" fill="#fff" stroke="#000"/><path d="M8 3 L10 5 L11 4 L9 2Z" fill="#e00000"/><path d="M9 9 H13 L11 12 V14 M9 14 H13" stroke="#c00000" fill="none"/><rect x="12" y="6" width="3" height="8" fill="#00a040"/></svg>
<svg style="left:20px;top:146px" width="15" height="14" viewBox="0 0 15 14"><rect x="0.5" y="1.5" width="14" height="11" fill="#f8f080" stroke="#000"/><path d="M1 8 L4 4 L8 8 L11 4 L14 7" stroke="#e00000" stroke-width="1.6" fill="none"/><rect x="0" y="12" width="15" height="1.5" fill="#000"/></svg>
<svg style="left:22px;top:162px" width="13" height="15" viewBox="0 0 13 15"><path d="M1 2 L6.5 0.5 L12 2 V8 C12 11 9 13 6.5 14 C4 13 1 11 1 8Z" fill="#fff" stroke="#000"/><rect x="5.5" y="3.5" width="2" height="7" fill="#8b0000"/><rect x="3" y="6" width="7" height="2" fill="#8b0000"/></svg>
<svg style="left:20px;top:179px" width="15" height="14" viewBox="0 0 15 14"><path d="M0.5 2.5 H5 L6 1 H10 L11 2.5 H14.5 V13.5 H0.5Z" fill="#f0e890" stroke="#404040"/><rect x="1" y="4" width="13" height="1" fill="#fff8c0"/></svg>
<svg style="left:20px;top:194px" width="15" height="15" viewBox="0 0 15 15"><rect x="0" y="0" width="9" height="9" fill="#000"/><path d="M2 1 V6 M4 1 V6 M6 1 V6" stroke="#fff" stroke-width="0.8"/><path d="M5 11 L13 3" stroke="#000" stroke-width="2.5"/><circle cx="11" cy="11" r="3.5" fill="#f04040"/><path d="M9 9 L13 13 M13 9 L9 13" stroke="#fff" stroke-width="0.7"/></svg>
<svg style="left:22px;top:210px" width="13" height="15" viewBox="0 0 13 15"><circle cx="6.5" cy="2" r="2" fill="#00008b"/><path d="M2 7 L4 4.5 H9 L11 7 L10 8 L9 7 V14 H7.5 V10 H5.5 V14 H4 V7 L3 8Z" fill="#00008b"/></svg>
<svg style="left:20px;top:226px" width="15" height="15" viewBox="0 0 15 15"><circle cx="7.5" cy="7.5" r="7" fill="#ffff00" stroke="#000"/><rect x="4.5" y="4" width="2" height="2.5" fill="#000"/><rect x="8.5" y="4" width="2" height="2.5" fill="#000"/><path d="M3.5 8.5 C5 12 10 12 11.5 8.5" stroke="#000" stroke-width="1.4" fill="none"/></svg>
<svg style="left:23px;top:243px" width="12" height="13" viewBox="0 0 12 13"><path d="M6 0 V3" stroke="#008000"/><path d="M1 7 C1 3 5 3 6 5 C7 3 11 3 11 7 C11 11 8 13 6 12 C4 13 1 11 1 7Z" fill="#008000"/><rect x="3" y="5" width="2" height="2" fill="#80ff80"/></svg>
<svg style="left:21px;top:258px" width="15" height="15" viewBox="0 0 15 15"><path d="M2 14 L9 3 C10 0 14 1 13 4" stroke="#000" stroke-width="2" fill="none"/><path d="M10 2 C11 1 13 1 13 3" stroke="#c00000" stroke-width="2" fill="none"/></svg>
<svg style="left:20px;top:274px" width="15" height="15" viewBox="0 0 15 15"><text x="0" y="13" font-family="Liberation Serif" font-weight="bold" font-size="16" fill="#000">R</text></svg>
<svg style="left:20px;top:290px" width="16" height="15" viewBox="0 0 16 15"><rect x="1" y="3" width="6" height="10" fill="#0000c0"/><rect x="2" y="0" width="3" height="4" fill="#0000c0"/><rect x="1" y="11" width="10" height="3" fill="#0000a0"/><circle cx="13" cy="8" r="1" fill="#80d0ff"/><circle cx="15" cy="11" r="1" fill="#80d0ff"/><circle cx="12" cy="11" r="1" fill="#80d0ff"/></svg>
<svg style="left:21px;top:306px" width="15" height="15" viewBox="0 0 15 15"><ellipse cx="8" cy="7" rx="5" ry="3" transform="rotate(-40 8 7)" fill="#208020" stroke="#004000"/><path d="M1 13 L4 10 M12 4 L14 2" stroke="#a0a0a0" stroke-width="1.5"/></svg>
<svg style="left:20px;top:322px" width="15" height="15" viewBox="0 0 15 15"><path d="M7.5 14 L1 7 C-1 4 1 0 4 0.5 C6 1 7 2 7.5 3 C8 2 9 1 11 0.5 C14 0 16 4 14 7Z" fill="#e00000" stroke="#800000"/><rect x="3" y="3" width="2" height="2" fill="#ff8080"/></svg>
<svg style="left:20px;top:338px" width="15" height="14" viewBox="0 0 15 14"><rect x="0" y="0" width="15" height="14" rx="1" fill="#000"/><path d="M1 7 H5 L6 3 L7 11 L8 2 L9 10 L10 6 H14" stroke="#00e000" fill="none" stroke-width="1.2"/></svg>
<svg style="left:22px;top:354px" width="13" height="15" viewBox="0 0 13 15"><path d="M0.5 0.5 H8 L11.5 4 V14.5 H0.5Z" fill="#fff" stroke="#000"/><rect x="3" y="5" width="6" height="1" fill="#0000a0"/><rect x="3" y="7" width="6" height="1" fill="#0000a0"/><rect x="3" y="9" width="6" height="1" fill="#0000a0"/><rect x="3" y="11" width="6" height="1" fill="#0000a0"/><rect x="12" y="2" width="1" height="13" fill="#808080"/></svg>
<svg style="left:20px;top:370px" width="15" height="15" viewBox="0 0 15 15"><rect x="0" y="1" width="8" height="5" fill="#000080"/><path d="M5 4 L11 4 L13 1" stroke="#000" fill="none"/><ellipse cx="8" cy="10" rx="6" ry="4" fill="#f0e060" stroke="#404040"/><ellipse cx="10" cy="11" rx="3" ry="2.5" fill="#c0c0c0"/></svg>
<svg style="left:20px;top:387px" width="15" height="14" viewBox="0 0 15 14"><path d="M0.5 2.5 H5 L6 1 H10 L11 2.5 H14.5 V13.5 H0.5Z" fill="#f0e890" stroke="#404040"/><rect x="1" y="4" width="13" height="1" fill="#fff8c0"/></svg>
</div>
<div class="a" style="left:211px;top:111px;width:1395px;height:459px;overflow:hidden">
<svg style="left:63px;top:1px" width="13" height="15" viewBox="0 0 13 15"><rect x="2" y="0" width="9" height="3" fill="#e000e0"/><rect x="6" y="0" width="3" height="3" fill="#a000a0"/><rect x="0" y="3" width="13" height="12" rx="2" fill="#0000c0"/><circle cx="6.5" cy="7" r="2.2" fill="#fff"/><circle cx="5.7" cy="6.8" r="0.6" fill="#0000c0"/><circle cx="7.3" cy="6.8" r="0.6" fill="#0000c0"/><path d="M2 10 L11 14 M11 10 L2 14" stroke="#fff" stroke-width="1.3"/></svg>
<svg style="left:61px;top:18px" width="16" height="15" viewBox="0 0 16 15"><path d="M1 2 L5.5 0.5 L10 2 V8 C10 11 8 13 5.5 14 C3 13 1 11 1 8Z" fill="#fff" stroke="#000"/><rect x="4.5" y="3.5" width="2" height="7" fill="#8b0000"/><rect x="2" y="6" width="7" height="2" fill="#8b0000"/><path d="M7 11 L10 14 L16 7" stroke="#00a000" stroke-width="2" fill="none"/></svg>
<svg style="left:62px;top:35px" width="16" height="15" viewBox="0 0 16 15"><path d="M1 0 V11 M6 0 V11 M1 5.5 H6" stroke="#000" stroke-width="1.5" fill="none"/><text x="8" y="14" font-family="Liberation Sans" font-weight="bold" font-size="11" fill="#008000">i</text></svg>
<svg style="left:63px;top:52px" width="13" height="15" viewBox="0 0 13 15"><path d="M1 2 L6.5 0.5 L12 2 V8 C12 11 9 13 6.5 14 C4 13 1 11 1 8Z" fill="#fff" stroke="#000"/><rect x="5.5" y="3.5" width="2" height="7" fill="#8b0000"/><rect x="3" y="6" width="7" height="2" fill="#8b0000"/></svg>
<svg style="left:63px;top:69px" width="13" height="15" viewBox="0 0 13 15"><path d="M1 2 L6.5 0.5 L12 2 V8 C12 11 9 13 6.5 14 C4 13 1 11 1 8Z" fill="#fff" stroke="#000"/><rect x="5.5" y="3.5" width="2" height="7" fill="#8b0000"/><rect x="3" y="6" width="7" height="2" fill="#8b0000"/></svg>
<svg style="left:61px;top:86px" width="14" height="15" viewBox="0 0 14 15"><path d="M1.5 1 V13 H6 V10" stroke="#000" stroke-width="2.2" fill="none"/><path d="M2 1 V12" stroke="#d0c020" stroke-width="1"/><circle cx="10" cy="5" r="3.5" fill="none" stroke="#000" stroke-width="1.8"/><path d="M8 6 C9 3 11 3 12 5" stroke="#00a000" fill="none"/><path d="M6 10 C10 11 12 9 10 8" stroke="#000" stroke-width="1.5" fill="none"/><circle cx="11" cy="12" r="1.5" fill="#e00000"/></svg>
<svg style="left:63px;top:103px" width="13" height="15" viewBox="0 0 13 15"><rect x="2" y="0" width="9" height="3" fill="#e000e0"/><rect x="6" y="0" width="3" height="3" fill="#a000a0"/><rect x="0" y="3" width="13" height="12" rx="2" fill="#0000c0"/><circle cx="6.5" cy="7" r="2.2" fill="#fff"/><circle cx="5.7" cy="6.8" r="0.6" fill="#0000c0"/><circle cx="7.3" cy="6.8" r="0.6" fill="#0000c0"/><path d="M2 10 L11 14 M11 10 L2 14" stroke="#fff" stroke-width="1.3"/></svg>
<svg style="left:61px;top:120px" width="16" height="15" viewBox="0 0 16 15"><path d="M1 2 L5.5 0.5 L10 2 V8 C10 11 8 13 5.5 14 C3 13 1 11 1 8Z" fill="#fff" stroke="#000"/><rect x="4.5" y="3.5" width="2" height="7" fill="#8b0000"/><rect x="2" y="6" width="7" height="2" fill="#8b0000"/><path d="M7 11 L10 14 L16 7" stroke="#00a000" stroke-width="2" fill="none"/></svg>
<svg style="left:61px;top:137px" width="14" height="15" viewBox="0 0 14 15"><path d="M1.5 1 V13 H6 V10" stroke="#000" stroke-width="2.2" fill="none"/><path d="M2 1 V12" stroke="#d0c020" stroke-width="1"/><circle cx="10" cy="5" r="3.5" fill="none" stroke="#000" stroke-width="1.8"/><path d="M8 6 C9 3 11 3 12 5" stroke="#00a000" fill="none"/><path d="M6 10 C10 11 12 9 10 8" stroke="#000" stroke-width="1.5" fill="none"/><circle cx="11" cy="12" r="1.5" fill="#e00000"/></svg>
<svg style="left:61px;top:154px" width="14" height="15" viewBox="0 0 14 15"><path d="M1.5 1 V13 H6 V10" stroke="#000" stroke-width="2.2" fill="none"/><path d="M2 1 V12" stroke="#d0c020" stroke-width="1"/><circle cx="10" cy="5" r="3.5" fill="none" stroke="#000" stroke-width="1.8"/><path d="M8 6 C9 3 11 3 12 5" stroke="#00a000" fill="none"/><path d="M6 10 C10 11 12 9 10 8" stroke="#000" stroke-width="1.5" fill="none"/><circle cx="11" cy="12" r="1.5" fill="#e00000"/></svg>
<svg style="left:61px;top:172px" width="16" height="15" viewBox="0 0 16 15"><path d="M3 2 H13 L15 10 H1Z" fill="#000"/><path d="M4 3 H12 L13 8 H3Z" fill="#b09840"/><rect x="6" y="4" width="4" height="2" fill="#e00000"/><rect x="1" y="10" width="15" height="4" fill="#b09840" stroke="#000"/></svg>
<svg style="left:62px;top:188px" width="16" height="15" viewBox="0 0 16 15"><path d="M1 0 V11 M6 0 V11 M1 5.5 H6" stroke="#000" stroke-width="1.5" fill="none"/><text x="8" y="14" font-family="Liberation Sans" font-weight="bold" font-size="11" fill="#800080">d</text></svg>
<svg style="left:62px;top:205px" width="16" height="15" viewBox="0 0 16 15"><path d="M1 0 V11 M6 0 V11 M1 5.5 H6" stroke="#000" stroke-width="1.5" fill="none"/><text x="8" y="14" font-family="Liberation Sans" font-weight="bold" font-size="11" fill="#008080">s</text></svg>
<svg style="left:62px;top:222px" width="16" height="15" viewBox="0 0 16 15"><path d="M1 0 V11 M6 0 V11 M1 5.5 H6" stroke="#000" stroke-width="1.5" fill="none"/><text x="8" y="14" font-family="Liberation Sans" font-weight="bold" font-size="11" fill="#008000">i</text></svg>
<svg style="left:63px;top:239px" width="13" height="15" viewBox="0 0 13 15"><path d="M1 2 L6.5 0.5 L12 2 V8 C12 11 9 13 6.5 14 C4 13 1 11 1 8Z" fill="#fff" stroke="#000"/><rect x="5.5" y="3.5" width="2" height="7" fill="#8b0000"/><rect x="3" y="6" width="7" height="2" fill="#8b0000"/></svg>
<svg style="left:63px;top:256px" width="13" height="15" viewBox="0 0 13 15"><path d="M1 2 L6.5 0.5 L12 2 V8 C12 11 9 13 6.5 14 C4 13 1 11 1 8Z" fill="#fff" stroke="#000"/><rect x="5.5" y="3.5" width="2" height="7" fill="#8b0000"/><rect x="3" y="6" width="7" height="2" fill="#8b0000"/></svg>
<svg style="left:63px;top:273px" width="13" height="15" viewBox="0 0 13 15"><path d="M1 2 L6.5 0.5 L12 2 V8 C12 11 9 13 6.5 14 C4 13 1 11 1 8Z" fill="#fff" stroke="#000"/><rect x="5.5" y="3.5" width="2" height="7" fill="#8b0000"/><rect x="3" y="6" width="7" height="2" fill="#8b0000"/></svg>
<svg style="left:62px;top:290px" width="14" height="14" viewBox="0 0 14 14"><circle cx="7" cy="7" r="6.5" fill="#0000c0"/><path d="M2 4 C4 2 6 3 7 5 C5 7 3 9 2 8Z M9 1 C12 2 13 5 13 8 C11 9 10 7 9 5Z" fill="#00c000"/><rect x="4.5" y="3" width="5" height="8" fill="#fff"/><path d="M5.5 4 V10 H8.5 M5.5 7 H8 M5.5 4 H8.5" stroke="#000" stroke-width="1" fill="none"/></svg>
<svg style="left:62px;top:307px" width="15" height="15" viewBox="0 0 15 15"><path d="M2 13 L11 3 C13 1 15 3 13 5 L5 14 C4 15 2 14 3 13 L10 5" stroke="#505050" stroke-width="1.8" fill="none"/></svg>
<svg style="left:62px;top:324px" width="16" height="15" viewBox="0 0 16 15"><path d="M1 0 V11 M6 0 V11 M1 5.5 H6" stroke="#000" stroke-width="1.5" fill="none"/><text x="8" y="14" font-family="Liberation Sans" font-weight="bold" font-size="11" fill="#0000ff">a</text></svg>
<svg style="left:62px;top:341px" width="16" height="15" viewBox="0 0 16 15"><path d="M1 0 V11 M6 0 V11 M1 5.5 H6" stroke="#000" stroke-width="1.5" fill="none"/><text x="8" y="14" font-family="Liberation Sans" font-weight="bold" font-size="11" fill="#0000ff">a</text></svg>
<svg style="left:62px;top:358px" width="16" height="15" viewBox="0 0 16 15"><path d="M1 0 V11 M6 0 V11 M1 5.5 H6" stroke="#000" stroke-width="1.5" fill="none"/><text x="8" y="14" font-family="Liberation Sans" font-weight="bold" font-size="11" fill="#0000ff">a</text></svg>
<svg style="left:66px;top:375px" width="12" height="15" viewBox="0 0 12 15"><rect x="0.5" y="1.5" width="11" height="13" fill="#fff" stroke="#000"/><rect x="1" y="0" width="10" height="2" fill="#000"/><rect x="2" y="4" width="8" height="1" fill="#0000ff"/><rect x="2" y="6" width="8" height="1" fill="#0000ff"/><rect x="2" y="8" width="8" height="1" fill="#0000ff"/><rect x="2" y="10" width="8" height="1" fill="#0000ff"/><rect x="2" y="12" width="8" height="1" fill="#0000ff"/></svg>
<svg style="left:66px;top:392px" width="12" height="15" viewBox="0 0 12 15"><rect x="0.5" y="1.5" width="11" height="13" fill="#fff" stroke="#000"/><rect x="1" y="0" width="10" height="2" fill="#000"/><rect x="2" y="4" width="8" height="1" fill="#0000ff"/><rect x="2" y="6" width="8" height="1" fill="#0000ff"/><rect x="2" y="8" width="8" height="1" fill="#0000ff"/><rect x="2" y="10" width="8" height="1" fill="#0000ff"/><rect x="2" y="12" width="8" height="1" fill="#0000ff"/></svg>
<svg style="left:62px;top:409px" width="16" height="15" viewBox="0 0 16 15"><path d="M1 0 V11 M6 0 V11 M1 5.5 H6" stroke="#000" stroke-width="1.5" fill="none"/><text x="8" y="14" font-family="Liberation Sans" font-weight="bold" font-size="11" fill="#800080">d</text></svg>
<svg style="left:62px;top:426px" width="16" height="15" viewBox="0 0 16 15"><path d="M1 0 V11 M6 0 V11 M1 5.5 H6" stroke="#000" stroke-width="1.5" fill="none"/><text x="8" y="14" font-family="Liberation Sans" font-weight="bold" font-size="11" fill="#008000">i</text></svg>
<svg style="left:62px;top:443px" width="16" height="15" viewBox="0 0 16 15"><path d="M1 0 V11 M6 0 V11 M1 5.5 H6" stroke="#000" stroke-width="1.5" fill="none"/><text x="8" y="14" font-family="Liberation Sans" font-weight="bold" font-size="11" fill="#0000ff">a</text></svg>
</div>
<div class="a" style="left:1163px;top:135px;width:126px;height:52px;background:#f6a800"></div>
<div class="a" style="left:1167px;top:139px;width:118px;height:44px;background:#e9eaf2;border:1px solid #a9aebc"></div>
<div class="a" style="left:1168px;top:140px;width:116px;height:17px;background:linear-gradient(#f3f1f3 0,#eeecee 45%,#e2e1e2 55%,#eceaec 100%)"></div>
<div class="a" style="left:1168px;top:156px;width:116px;height:1px;background:#c8c8d0"></div>
<div class="a" style="left:1169px;top:157px;width:114px;height:24px;background:#e6eefa;border:1px solid #c8cdd8"></div>
<div class="a" style="left:1384px;top:121px;width:170px;height:75px;border:4px solid #000;background:#fff"></div>
<div class="t" style="left:1384px;top:137px;width:170px;text-align:center;font-size:19px;line-height:22px;color:#2b2b2b"><b style="color:#111">Vision+</b> Floating<br>Toolbar</div>
<div class="a" style="left:1300px;top:156px;width:84px;height:3px;background:#000"></div>
<svg style="left:1290px;top:151px" width="14" height="13" viewBox="0 0 14 13"><path d="M0 6.5 L14 0 L14 13Z" fill="#000"/></svg>
<div class="a" style="left:1384px;top:355px;width:173px;height:74px;border:4px solid #000;background:#fff"></div>
<div class="t" style="left:1384px;top:371px;width:173px;text-align:center;font-size:19px;line-height:22px;color:#2b2b2b"><b style="color:#111">Vision+</b> Alerts<br>Screen</div>
<div class="a" style="left:1346px;top:390px;width:38px;height:3px;background:#000"></div>
<svg style="left:1334px;top:385px" width="14" height="13" viewBox="0 0 14 13"><path d="M0 6.5 L14 0 L14 13Z" fill="#000"/></svg>
<div class="a" style="left:848px;top:234px;width:488px;height:289px;background:#f6a800"></div>
<div class="a" style="left:852px;top:238px;width:480px;height:281px;background:#f7f9fd;border:1px solid #b4bccb"></div>
<div class="a" style="left:853px;top:239px;width:478px;height:20px;background:linear-gradient(#f4f3f4 0,#efeeef 45%,#e7e6e7 55%,#eeedee 100%)"></div>
<div class="t b" style="left:878px;top:242px;color:#a3a3a3;letter-spacing:0.35px">MR WINTER, ALFRED LIVINGSTONE [26/02/1942] - 01 Apr 2021</div>
<div class="a" style="left:853px;top:259px;width:477px;height:26px;background:linear-gradient(#eef5fd 0,#dde9f9 60%,#cfe0f6 100%);border-bottom:1px solid #a7c4ea"></div>
<div class="a" style="left:855px;top:285px;width:457px;height:231px;overflow:hidden;background:#f6f8fd">
<div class="a" style="left:1px;top:1px;width:450px;height:17px;background:#000"></div>
<div class="t j" style="left:33px;top:4px;color:#fff">Atrial fibrillation</div>
<div class="a" style="left:4px;top:4px;width:11px;height:11px;background:linear-gradient(#fdfdfe,#d5dcec);border:1px solid #7d8aa8;border-radius:2px"></div>
<div class="a" style="left:7px;top:9px;width:5px;height:1px;background:#2b3a5c"></div>
<div class="a" style="left:16px;top:18px;width:436px;height:17px;background:#f3fbef"></div>
<div class="t j" style="left:33px;top:21px;color:#000">AF006: CHADS2-VASC not recorded</div>
<div class="t j" style="left:33px;top:38px;color:#000">Coronary heart disease</div>
<div class="a" style="left:4px;top:38px;width:11px;height:11px;background:linear-gradient(#fdfdfe,#d5dcec);border:1px solid #7d8aa8;border-radius:2px"></div>
<div class="a" style="left:7px;top:43px;width:5px;height:1px;background:#2b3a5c"></div>
<div class="a" style="left:16px;top:52px;width:436px;height:17px;background:#f3fbef"></div>
<div class="t j" style="left:33px;top:55px;color:#000">CHD005: Aspirin or alternative not recorded</div>
<div class="t j" style="left:33px;top:72px;color:#000">CHD008: Blood pressure is not 140/90 or less</div>
<div class="t b" style="left:33px;top:89px;color:#1a8a1a;letter-spacing:0.3px">Depression</div>
<div class="a" style="left:4px;top:89px;width:11px;height:11px;background:linear-gradient(#fdfdfe,#d5dcec);border:1px solid #7d8aa8;border-radius:2px"></div>
<div class="a" style="left:7px;top:94px;width:5px;height:1px;background:#2b3a5c"></div>
<div class="a" style="left:9px;top:92px;width:1px;height:5px;background:#2b3a5c"></div>
<div class="t j" style="left:33px;top:106px;color:#000">Diabetes mellitus</div>
<div class="a" style="left:4px;top:106px;width:11px;height:11px;background:linear-gradient(#fdfdfe,#d5dcec);border:1px solid #7d8aa8;border-radius:2px"></div>
<div class="a" style="left:7px;top:111px;width:5px;height:1px;background:#2b3a5c"></div>
<div class="a" style="left:16px;top:120px;width:436px;height:17px;background:#f3fbef"></div>
<div class="t j" style="left:33px;top:123px;color:#000">DM012: Foot examination and risk classification</div>
<div class="t j" style="left:33px;top:140px;color:#000">DM019: Blood pressure is not 140/80 or less</div>
<div class="a" style="left:16px;top:154px;width:436px;height:17px;background:#f3fbef"></div>
<div class="t j" style="left:33px;top:157px;color:#000">DM020: IFCC-HbA1c is not 58 or less</div>
<div class="t j" style="left:33px;top:174px;color:#000">DM023: Statin treatment required</div>
<div class="t j" style="left:33px;top:191px;color:#000">Heart failure</div>
<div class="a" style="left:4px;top:191px;width:11px;height:11px;background:linear-gradient(#fdfdfe,#d5dcec);border:1px solid #7d8aa8;border-radius:2px"></div>
<div class="a" style="left:7px;top:196px;width:5px;height:1px;background:#2b3a5c"></div>
<div class="t j" style="left:33px;top:208px;color:#000">HF007: Heart Failure has not been reviewed that includes an assessment of functional capacity</div>
<div class="t j" style="left:33px;top:225px;color:#000">Hypertension</div>
<div class="a" style="left:4px;top:225px;width:11px;height:11px;background:linear-gradient(#fdfdfe,#d5dcec);border:1px solid #7d8aa8;border-radius:2px"></div>
<div class="a" style="left:7px;top:230px;width:5px;height:1px;background:#2b3a5c"></div>
</div>
<div class="a" style="left:1306px;top:285px;width:6px;height:231px;background:#edf2fb"></div>
<div class="a" style="left:1312px;top:285px;width:17px;height:231px;background:#eceef4"></div>
<svg style="left:1314px;top:289px" width="11" height="6" viewBox="0 0 11 6"><path d="M0 6 L5.5 0 L11 6Z" fill="#4e5c7c"/></svg>
<div class="a" style="left:1312px;top:302px;width:16px;height:117px;background:linear-gradient(90deg,#c3cfe2,#d2ddeb 50%,#bfcbdf);border:1px solid #6e7d9c;border-radius:2px"></div>
<div class="a" style="left:1316px;top:357px;width:8px;height:1px;background:#56657f"></div>
<div class="a" style="left:1316px;top:359px;width:8px;height:1px;background:#56657f"></div>
<div class="a" style="left:1316px;top:361px;width:8px;height:1px;background:#56657f"></div>
<svg style="left:1314px;top:506px" width="11" height="6" viewBox="0 0 11 6"><path d="M0 0 L5.5 6 L11 0Z" fill="#4e5c7c"/></svg>
<div class="a" style="left:853px;top:516px;width:478px;height:3px;background:#dfe3ea"></div>
<svg style="left:1175px;top:161px" width="16" height="16" viewBox="0 0 16 16"><rect x="0" y="0" width="16" height="16" rx="3" fill="#0e6a6a"/><path d="M6 3 H10 V6 H13 V10 H10 V13 H6 V10 H3 V6 H6Z" fill="#f8f070"/></svg>
<svg style="left:1216px;top:161px" width="16" height="16" viewBox="0 0 16 16"><rect x="1" y="7" width="4" height="8" fill="#90d020" stroke="#3a8a10"/><rect x="5" y="1" width="5" height="14" fill="#f06040" stroke="#c02010"/><rect x="10" y="4" width="5" height="11" fill="#40a8f0" stroke="#1070c0"/><rect x="1" y="15" width="15" height="1" fill="#705070"/></svg>
<svg style="left:1239px;top:161px" width="16" height="16" viewBox="0 0 16 16"><rect x="0.5" y="0.5" width="15" height="14" fill="#fff" stroke="#1b74c8" stroke-width="1.2"/><rect x="3" y="3" width="10" height="2" fill="#4da0e8"/><rect x="3" y="7" width="4" height="5" fill="#bcd8f4" stroke="#4da0e8"/><circle cx="12.5" cy="12.5" r="3.5" fill="#6cc020"/><path d="M12.5 10.5 V14.5 M10.5 12.5 H14.5" stroke="#fff" stroke-width="1.3"/></svg>
<svg style="left:1262px;top:161px" width="16" height="16" viewBox="0 0 16 16"><rect x="2" y="0.5" width="13" height="15" fill="#dfeefc" stroke="#2a70c0"/><path d="M1 3 H3 M1 6 H3 M1 9 H3 M1 12 H3" stroke="#404040"/><circle cx="9" cy="5" r="2.8" fill="#e0a060" stroke="#704020" stroke-width="0.8"/><path d="M4 15 C4 10 14 10 14 15Z" fill="#3a80d0"/></svg>
<svg style="left:857px;top:241px" width="16" height="16" viewBox="0 0 16 16"><rect x="1" y="7" width="4" height="8" fill="#90d020" stroke="#3a8a10"/><rect x="5" y="1" width="5" height="14" fill="#f06040" stroke="#c02010"/><rect x="10" y="4" width="5" height="11" fill="#40a8f0" stroke="#1070c0"/><rect x="1" y="15" width="15" height="1" fill="#705070"/></svg>
<svg style="left:1316px;top:245px" width="9" height="9" viewBox="0 0 9 9"><path d="M0.5 0.5 L8.5 8.5 M8.5 0.5 L0.5 8.5" stroke="#b8b8b8" stroke-width="1.6"/></svg>
<svg style="left:862px;top:263px" width="15" height="16" viewBox="0 0 15 16"><path d="M0.5 0.5 H8 L11.5 4 V14.5 H0.5Z" fill="#fff" stroke="#a8a8b0"/><circle cx="6" cy="8" r="3.3" fill="#e8f0f8" stroke="#505860" stroke-width="1.2"/><path d="M8.5 10.5 L13 15" stroke="#e0a030" stroke-width="2.5"/></svg>
<svg style="left:888px;top:263px" width="16" height="16" viewBox="0 0 16 16"><rect x="4" y="1" width="8" height="5" fill="#fff" stroke="#909090"/><rect x="0.5" y="5.5" width="15" height="7" rx="1.5" fill="#a0a8b0" stroke="#707880"/><rect x="4" y="10" width="8" height="5" fill="#fff" stroke="#909090"/><rect x="9" y="7" width="4" height="1.5" fill="#3a8ad0"/></svg>
<div class="a" style="left:913px;top:264px;width:1px;height:17px;background:#9ec0ec"></div>
<div class="a" style="left:914px;top:264px;width:1px;height:17px;background:#fff"></div>
<svg style="left:922px;top:263px" width="15" height="16" viewBox="0 0 15 16"><path d="M1 1 L8 15" stroke="#3a4a8a" stroke-width="1.3"/><path d="M1 1 C4 3 6 0 9 1 L14 2 L10 7 C8 6 6 8 4 7Z" fill="#f06040" stroke="#c03020" stroke-width="0.8"/></svg>
<div class="a" style="left:945px;top:264px;width:1px;height:17px;background:#9ec0ec"></div>
<div class="a" style="left:946px;top:264px;width:1px;height:17px;background:#fff"></div>
<svg style="left:954px;top:263px" width="16" height="16" viewBox="0 0 16 16"><rect x="0.5" y="0.5" width="15" height="14" fill="#fff" stroke="#8090a8"/><rect x="1" y="1" width="14" height="2" fill="#9ab4dc"/><rect x="1" y="3" width="3" height="11" fill="#dde6f4"/><path d="M6 6 H14 M6 8.5 H14 M6 11 H14" stroke="#5a7ac8"/></svg>
<div class="a" style="left:979px;top:264px;width:1px;height:17px;background:#9ec0ec"></div>
<div class="a" style="left:980px;top:264px;width:1px;height:17px;background:#fff"></div>
<svg style="left:987px;top:263px" width="16" height="16" viewBox="0 0 16 16"><rect x="0.5" y="3.5" width="13" height="12" fill="#fff" stroke="#8090a8"/><rect x="1" y="4" width="12" height="2" fill="#6a8ad0"/><path d="M2 8.5 H6 M2 11 H10 M2 13.5 H7" stroke="#5a7ac8"/><path d="M7 8.5 H10" stroke="#e04090"/><circle cx="12.5" cy="4.5" r="3.2" fill="#fff" stroke="#505860"/><path d="M12.5 3 V4.5 H14" stroke="#505860" stroke-width="0.8" fill="none"/></svg>
<svg style="left:1305px;top:263px" width="17" height="17" viewBox="0 0 17 17"><defs><radialGradient id="qg" cx="40%" cy="35%" r="65%"><stop offset="0" stop-color="#a8c4ec"/><stop offset="1" stop-color="#5a86c8"/></radialGradient></defs><circle cx="8.5" cy="8.5" r="8" fill="url(#qg)" stroke="#6a90cc" stroke-width="0.8"/><text x="8.5" y="13" text-anchor="middle" font-family="Liberation Sans" font-weight="bold" font-size="12" fill="#fff">?</text></svg>
</body></html>
